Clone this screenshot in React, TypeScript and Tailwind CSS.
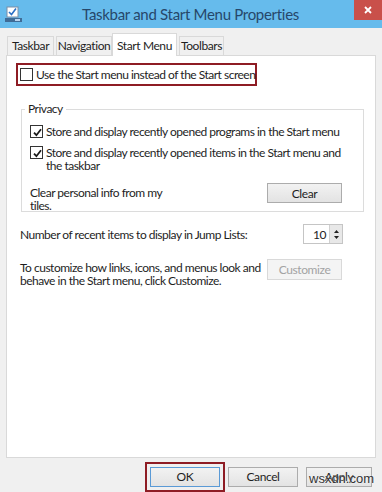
import React from "react";

const font = { fontFamily: 'Lato, "Liberation Sans", sans-serif' };

const Check = () => (
  <svg width="9" height="9" viewBox="0 0 9 9" className="absolute left-[1.5px] top-[1.5px]">
    <path d="M1 4.6 L3.4 7.2 L8 1.2" fill="none" stroke="#1a1a1a" strokeWidth="1.8" />
  </svg>
);

const Box = ({ checked }: { checked?: boolean }) => (
  <span className="relative shrink-0 w-[13px] h-[13px] border border-[#333] bg-white">
    {checked && <Check />}
  </span>
);

const Btn = ({
  label,
  className = "",
  disabled,
}: {
  label: string;
  className?: string;
  disabled?: boolean;
}) => (
  <div
    className={
      "flex items-center justify-center border text-[12px] tracking-[-0.4px] " +
      (disabled
        ? "border-[#d9d9d9] bg-[#f4f4f4] text-[#a3a3a3] "
        : "border-[#acacac] bg-gradient-to-b from-[#f2f2f2] to-[#e3e3e3] text-[#1e1e1e] ") +
      className
    }
  >
    {label}
  </div>
);

const tabs = ["Taskbar", "Navigation", "Start Menu", "Toolbars"];
const tabWidths = ["w-[47px]", "w-[56px]", "w-[65px]", "w-[45px]"];

export default function App() {
  return (
    <div
      className="relative w-[382px] h-[492px] overflow-hidden bg-[#f0f0f0] text-[#1e1e1e] flex flex-col"
      style={font}
    >
      {/* title bar */}
      <div className="relative h-[28px] shrink-0 bg-[#66bbec] flex items-center justify-center">
        <svg width="17" height="17" viewBox="0 0 17 17" className="absolute left-[5px] top-[6px]">
          <rect x="2" y="1" width="11" height="10" fill="#fff" stroke="#7a8ea5" />
          <path d="M4 6 L6.5 8.5 L11 2.5" fill="none" stroke="#2a6fc4" strokeWidth="1.6" />
          <rect x="0" y="12" width="17" height="4" fill="#3f6c97" />
          <rect x="10" y="13" width="5" height="2" fill="#b9d4ef" />
        </svg>
        <span className="text-[15px] tracking-[-0.3px] text-[#26476a] ml-[-1px] whitespace-nowrap">
          Taskbar and Start Menu Properties
        </span>
        <div className="absolute right-0 top-0 w-[28px] h-[20px] bg-[#c9504a] flex items-center justify-center">
          <svg width="8" height="8" viewBox="0 0 8 8">
            <path d="M1 1 L7 7 M7 1 L1 7" stroke="#fff" strokeWidth="1.8" />
          </svg>
        </div>
      </div>

      {/* tabs */}
      <div className="flex items-end h-[27px] pl-[7px] tracking-[-0.4px]">
        {tabs.map((t, i) => {
          const sel = i === 2;
          return (
            <div
              key={t}
              className={
                "flex justify-center text-[12px] border border-[#d9d9d9] whitespace-nowrap " +
                tabWidths[i] +
                (sel
                  ? " h-[23px] bg-white border-b-0 z-10 mb-[-1px] items-start pt-[3px]"
                  : " h-[19px] bg-[#f0f0f0] border-b-0 items-center" + (i === 0 ? "" : " ml-[2px]"))
              }
            >
              {t}
            </div>
          );
        })}
      </div>

      {/* panel */}
      <div className="ml-[6px] w-[370px] h-[403px] border border-[#d9d9d9] bg-white flex flex-col text-[12px] leading-[13px] tracking-[-0.5px]">
        <div className="mt-[7px] ml-[9px] w-[241px] h-[23px] border-2 border-[#8e1c24] flex items-center pl-[2px] gap-[3px]">
          <Box />
          <span className="whitespace-nowrap">Use the Start menu instead of the Start screen</span>
        </div>

        <fieldset className="mt-[16px] ml-[14px] w-[343px] min-w-0 h-[110px] border border-[#dcdcdc] px-[8px]">
          <legend className="px-[3px] ml-[-5px] text-[12px] leading-[14px]">Privacy</legend>
          <div className="flex items-start gap-[3px] mt-[9px]">
            <Box checked />
            <span className="whitespace-nowrap">Store and display recently opened programs in the Start menu</span>
          </div>
          <div className="flex items-start gap-[3px] mt-[8px]">
            <Box checked />
            <span className="w-[312px]">
              Store and display recently opened items in the Start menu and the taskbar
            </span>
          </div>
          <div className="flex items-start justify-between mt-[11px]">
            <span className="w-[140px] mt-[3px]">Clear personal info from my tiles.</span>
            <Btn label="Clear" className="w-[75px] h-[20px] mr-[13px]" />
          </div>
        </fieldset>

        <div className="flex items-center justify-between mt-[12px] ml-[13px] mr-[32px]">
          <span className="whitespace-nowrap">Number of recent items to display in Jump Lists:</span>
          <div className="flex h-[20px] w-[40px] border border-[#c5c5c5] bg-white">
            <span className="flex-1 flex items-center justify-end pr-[3px]">10</span>
            <div className="w-[13px] border-l border-[#d0d0d0] bg-[#e8e8e8] flex flex-col items-center justify-center gap-[3px]">
              <svg width="5" height="3" viewBox="0 0 5 3">
                <path d="M0 3 L2.5 0 L5 3 Z" fill="#222" />
              </svg>
              <svg width="5" height="3" viewBox="0 0 5 3">
                <path d="M0 0 L2.5 3 L5 0 Z" fill="#222" />
              </svg>
            </div>
          </div>
        </div>

        <div className="flex items-start justify-between mt-[17px] ml-[13px] mr-[33px]">
          <span className="w-[242px]">
            To customize how links, icons, and menus look and behave in the Start menu, click Customize.
          </span>
          <Btn label="Customize" disabled className="w-[75px] h-[21px] mt-[-2px]" />
        </div>
      </div>

      {/* bottom buttons */}
      <div className="flex items-center mt-[4px] ml-[145px]">
        <div className="border-2 border-[#8e1c24] p-[3px]">
          <Btn label="OK" className="w-[70px] h-[20px] !border-[#5a9ad6]" />
        </div>
        <Btn label="Cancel" className="w-[70px] h-[20px] ml-[3px]" />
        <Btn label="Apply" className="w-[66px] h-[20px] ml-[8px]" />
      </div>

      <span
        className="absolute left-[309px] top-[472px] text-[13px] leading-[14px] text-[#333]"
        style={{ fontFamily: '"Liberation Sans", sans-serif', textShadow: "0 0 2px #fff" }}
      >
        wsxdn.com
      </span>
    </div>
  );
}
